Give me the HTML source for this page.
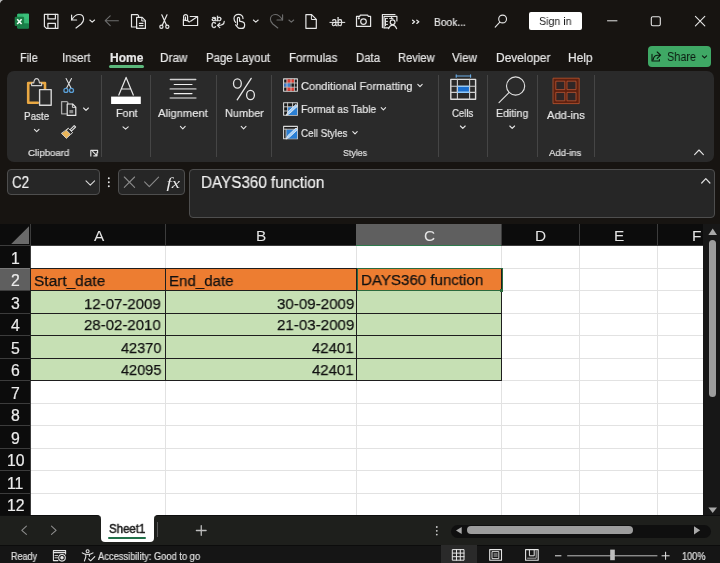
<!DOCTYPE html>
<html><head><meta charset="utf-8">
<style>
*{margin:0;padding:0;box-sizing:border-box}
html,body{width:720px;height:563px;overflow:hidden;background:#171411;font-family:"Liberation Sans",sans-serif}
.a{position:absolute}
.t{position:absolute;white-space:nowrap;line-height:1;font-family:"Liberation Sans",sans-serif;will-change:transform}
svg.a{overflow:visible;will-change:transform}
</style></head><body>
<div class="a" style="left:0px;top:0px;width:720px;height:224px;background:#171411;"></div>
<div class="a" style="left:7px;top:70.5px;width:707px;height:91px;background:#2a2a2a;border-radius:7px"></div>
<div class="a" style="left:7px;top:169px;width:92.5px;height:26px;background:#262626;border:1px solid #4e4e4e;border-radius:4px"></div>
<div class="a" style="left:118px;top:169px;width:67px;height:26px;background:#262626;border:1px solid #4e4e4e;border-radius:4px"></div>
<div class="a" style="left:189px;top:169px;width:526px;height:48.5px;background:#262626;border:1px solid #4e4e4e;border-radius:4px"></div>
<div class="a" style="left:647.5px;top:45.8px;width:63.5px;height:21.7px;background:#3fa865;border-radius:4px"></div>
<div class="a" style="left:529px;top:12px;width:52.5px;height:18.2px;background:#ffffff;border-radius:2px"></div>
<div class="a" style="left:109px;top:65.3px;width:35.3px;height:2.5px;background:#5cb87c;border-radius:2px"></div>
<div class="a" style="left:0px;top:224px;width:703px;height:292px;background:#ffffff;"></div>
<div class="a" style="left:0px;top:224px;width:703px;height:22px;background:#0c0c0c;"></div>
<div class="a" style="left:0px;top:224px;width:31px;height:292px;background:#0c0c0c;"></div>
<div class="a" style="left:165px;top:246px;width:1px;height:270px;background:#e2e2e2;"></div>
<div class="a" style="left:356px;top:246px;width:1px;height:270px;background:#e2e2e2;"></div>
<div class="a" style="left:501px;top:246px;width:1px;height:270px;background:#e2e2e2;"></div>
<div class="a" style="left:579px;top:246px;width:1px;height:270px;background:#e2e2e2;"></div>
<div class="a" style="left:657px;top:246px;width:1px;height:270px;background:#e2e2e2;"></div>
<div class="a" style="left:31px;top:268px;width:672px;height:1px;background:#e2e2e2;"></div>
<div class="a" style="left:31px;top:290px;width:672px;height:1px;background:#e2e2e2;"></div>
<div class="a" style="left:31px;top:313px;width:672px;height:1px;background:#e2e2e2;"></div>
<div class="a" style="left:31px;top:335px;width:672px;height:1px;background:#e2e2e2;"></div>
<div class="a" style="left:31px;top:358px;width:672px;height:1px;background:#e2e2e2;"></div>
<div class="a" style="left:31px;top:380px;width:672px;height:1px;background:#e2e2e2;"></div>
<div class="a" style="left:31px;top:403px;width:672px;height:1px;background:#e2e2e2;"></div>
<div class="a" style="left:31px;top:425px;width:672px;height:1px;background:#e2e2e2;"></div>
<div class="a" style="left:31px;top:448px;width:672px;height:1px;background:#e2e2e2;"></div>
<div class="a" style="left:31px;top:470px;width:672px;height:1px;background:#e2e2e2;"></div>
<div class="a" style="left:31px;top:493px;width:672px;height:1px;background:#e2e2e2;"></div>
<div class="a" style="left:165px;top:224px;width:1px;height:22px;background:#3c3c3c;"></div>
<div class="a" style="left:356px;top:224px;width:1px;height:22px;background:#3c3c3c;"></div>
<div class="a" style="left:501px;top:224px;width:1px;height:22px;background:#3c3c3c;"></div>
<div class="a" style="left:579px;top:224px;width:1px;height:22px;background:#3c3c3c;"></div>
<div class="a" style="left:657px;top:224px;width:1px;height:22px;background:#3c3c3c;"></div>
<div class="a" style="left:30px;top:224px;width:1px;height:292px;background:#3c3c3c;"></div>
<div class="a" style="left:0px;top:268px;width:31px;height:1px;background:#3c3c3c;"></div>
<div class="a" style="left:0px;top:290px;width:31px;height:1px;background:#3c3c3c;"></div>
<div class="a" style="left:0px;top:313px;width:31px;height:1px;background:#3c3c3c;"></div>
<div class="a" style="left:0px;top:335px;width:31px;height:1px;background:#3c3c3c;"></div>
<div class="a" style="left:0px;top:358px;width:31px;height:1px;background:#3c3c3c;"></div>
<div class="a" style="left:0px;top:380px;width:31px;height:1px;background:#3c3c3c;"></div>
<div class="a" style="left:0px;top:403px;width:31px;height:1px;background:#3c3c3c;"></div>
<div class="a" style="left:0px;top:425px;width:31px;height:1px;background:#3c3c3c;"></div>
<div class="a" style="left:0px;top:448px;width:31px;height:1px;background:#3c3c3c;"></div>
<div class="a" style="left:0px;top:470px;width:31px;height:1px;background:#3c3c3c;"></div>
<div class="a" style="left:0px;top:493px;width:31px;height:1px;background:#3c3c3c;"></div>
<div class="a" style="left:0px;top:245px;width:703px;height:1px;background:#3c3c3c;"></div>
<div class="a" style="left:0px;top:268px;width:30px;height:22px;background:#5f5f5f;"></div>
<div class="a" style="left:0px;top:268px;width:30px;height:1px;background:#7a7a7a;"></div>
<div class="a" style="left:356px;top:224px;width:145px;height:21px;background:#5f5f5f;"></div>
<div class="a" style="left:356px;top:244.5px;width:145px;height:1.5px;background:#2f7a4d;"></div>
<svg class="a" style="left:0;top:0" width="720" height="563"><polygon points="29,226.3 29,244.1 11.2,244.1" fill="#6a6a6a"/></svg>
<div class="a" style="left:31px;top:268px;width:470px;height:22px;background:#ed7d31;"></div>
<div class="a" style="left:31px;top:290px;width:470px;height:90px;background:#c6e0b4;"></div>
<div class="a" style="left:30px;top:268px;width:472px;height:1px;background:#1e1e1e;"></div>
<div class="a" style="left:30px;top:290px;width:472px;height:1px;background:#1e1e1e;"></div>
<div class="a" style="left:30px;top:313px;width:472px;height:1px;background:#1e1e1e;"></div>
<div class="a" style="left:30px;top:335px;width:472px;height:1px;background:#1e1e1e;"></div>
<div class="a" style="left:30px;top:358px;width:472px;height:1px;background:#1e1e1e;"></div>
<div class="a" style="left:30px;top:380px;width:472px;height:1px;background:#1e1e1e;"></div>
<div class="a" style="left:30px;top:268px;width:1px;height:113px;background:#1e1e1e;"></div>
<div class="a" style="left:165px;top:268px;width:1px;height:113px;background:#1e1e1e;"></div>
<div class="a" style="left:356px;top:268px;width:1px;height:113px;background:#1e1e1e;"></div>
<div class="a" style="left:501px;top:268px;width:1px;height:113px;background:#1e1e1e;"></div>
<div class="a" style="left:356.5px;top:267.5px;width:146px;height:23.5px;background:transparent;border:1.4px solid #2a6a3e"></div>
<div class="a" style="left:499.8px;top:288.6px;width:3.6px;height:3.6px;background:#2a6a3e;"></div>
<div class="t" style="left:93.54px;top:227.76px;font-size:15.4px;color:#e4e4e4;">A</div>
<div class="t" style="left:256.08px;top:227.76px;font-size:15.4px;color:#e4e4e4;">B</div>
<div class="t" style="left:423.66px;top:227.76px;font-size:15.4px;color:#e4e4e4;">C</div>
<div class="t" style="left:535.16px;top:227.76px;font-size:15.4px;color:#e4e4e4;">D</div>
<div class="t" style="left:613.58px;top:227.76px;font-size:15.4px;color:#e4e4e4;">E</div>
<div class="t" style="left:692.00px;top:227.76px;font-size:15.4px;color:#e4e4e4;">F</div>
<div class="t" style="left:10.92px;top:250.72px;font-size:15.8px;color:#ececec;-webkit-text-stroke:0.2px #ececec;">1</div>
<div class="t" style="left:10.92px;top:273.22px;font-size:15.8px;color:#ececec;-webkit-text-stroke:0.2px #ececec;">2</div>
<div class="t" style="left:10.92px;top:295.72px;font-size:15.8px;color:#ececec;-webkit-text-stroke:0.2px #ececec;">3</div>
<div class="t" style="left:10.92px;top:318.22px;font-size:15.8px;color:#ececec;-webkit-text-stroke:0.2px #ececec;">4</div>
<div class="t" style="left:10.92px;top:340.72px;font-size:15.8px;color:#ececec;-webkit-text-stroke:0.2px #ececec;">5</div>
<div class="t" style="left:10.92px;top:363.22px;font-size:15.8px;color:#ececec;-webkit-text-stroke:0.2px #ececec;">6</div>
<div class="t" style="left:10.92px;top:385.72px;font-size:15.8px;color:#ececec;-webkit-text-stroke:0.2px #ececec;">7</div>
<div class="t" style="left:10.92px;top:408.22px;font-size:15.8px;color:#ececec;-webkit-text-stroke:0.2px #ececec;">8</div>
<div class="t" style="left:10.92px;top:430.72px;font-size:15.8px;color:#ececec;-webkit-text-stroke:0.2px #ececec;">9</div>
<div class="t" style="left:6.53px;top:453.22px;font-size:15.8px;color:#ececec;-webkit-text-stroke:0.2px #ececec;">10</div>
<div class="t" style="left:7.08px;top:475.72px;font-size:15.8px;color:#ececec;-webkit-text-stroke:0.2px #ececec;">11</div>
<div class="t" style="left:6.53px;top:498.22px;font-size:15.8px;color:#ececec;-webkit-text-stroke:0.2px #ececec;">12</div>
<div class="t" style="left:33.80px;top:272.57px;font-size:15.5px;color:#111;transform:scaleX(0.9954);transform-origin:0 0;-webkit-text-stroke:0.25px #111;">Start_date</div>
<div class="t" style="left:169.10px;top:272.57px;font-size:15.5px;color:#111;transform:scaleX(0.9723);transform-origin:0 0;-webkit-text-stroke:0.25px #111;">End_date</div>
<div class="t" style="left:361.20px;top:272.47px;font-size:15.5px;color:#111;transform:scaleX(0.9733);transform-origin:0 0;-webkit-text-stroke:0.25px #111;">DAYS360 function</div>
<div class="t" style="left:84.30px;top:295.57px;font-size:15.5px;color:#111;transform:scaleX(0.9674);transform-origin:0 0;-webkit-text-stroke:0.25px #111;">12-07-2009</div>
<div class="t" style="left:84.30px;top:317.47px;font-size:15.5px;color:#111;transform:scaleX(0.9674);transform-origin:0 0;-webkit-text-stroke:0.25px #111;">28-02-2010</div>
<div class="t" style="left:120.60px;top:339.67px;font-size:15.5px;color:#111;transform:scaleX(0.9376);transform-origin:0 0;-webkit-text-stroke:0.25px #111;">42370</div>
<div class="t" style="left:120.60px;top:362.27px;font-size:15.5px;color:#111;transform:scaleX(0.9376);transform-origin:0 0;-webkit-text-stroke:0.25px #111;">42095</div>
<div class="t" style="left:276.70px;top:295.57px;font-size:15.5px;color:#111;transform:scaleX(0.9750);transform-origin:0 0;-webkit-text-stroke:0.25px #111;">30-09-2009</div>
<div class="t" style="left:276.70px;top:317.47px;font-size:15.5px;color:#111;transform:scaleX(0.9750);transform-origin:0 0;-webkit-text-stroke:0.25px #111;">21-03-2009</div>
<div class="t" style="left:312.40px;top:339.67px;font-size:15.5px;color:#111;transform:scaleX(0.9654);transform-origin:0 0;-webkit-text-stroke:0.25px #111;">42401</div>
<div class="t" style="left:312.40px;top:362.27px;font-size:15.5px;color:#111;transform:scaleX(0.9654);transform-origin:0 0;-webkit-text-stroke:0.25px #111;">42401</div>
<div class="a" style="left:703px;top:224px;width:17px;height:291px;background:#171717;"></div>
<div class="a" style="left:709px;top:239.5px;width:7.4px;height:157.5px;background:#9d9d9d;border-radius:4px"></div>
<div class="a" style="left:0px;top:515px;width:720px;height:30.5px;background:#1e1f1c;"></div>
<div class="a" style="left:0px;top:545px;width:720px;height:1px;background:#0c0c0c;"></div>
<div class="a" style="left:0px;top:546px;width:720px;height:17px;background:#151515;"></div>
<div class="a" style="left:96px;top:515px;width:63px;height:6px;background:#ffffff;"></div>
<div class="a" style="left:0px;top:515px;width:100.6px;height:30px;background:#1e1f1c;border-radius:0 4px 0 0;border-top:1.5px solid #0e0e0e"></div>
<div class="a" style="left:154.2px;top:515px;width:566px;height:30px;background:#1e1f1c;border-radius:4px 0 0 0;border-top:1.5px solid #0e0e0e"></div>
<div class="a" style="left:100.6px;top:515px;width:53.6px;height:26.7px;background:#ffffff;border-radius:0 0 4px 4px"></div>
<div class="a" style="left:107.8px;top:537.2px;width:38.3px;height:1.9px;background:#1f6f48;border-radius:1px"></div>
<div class="a" style="left:157px;top:522.2px;width:1px;height:14.5px;background:#555555;"></div>
<div class="a" style="left:450.8px;top:524.5px;width:260px;height:13px;background:#0f0f0f;border-radius:6.5px"></div>
<div class="a" style="left:466.5px;top:526.2px;width:166.4px;height:7.7px;background:#9d9d9d;border-radius:4px"></div>
<div class="a" style="left:440.8px;top:544.5px;width:36px;height:18.5px;background:#2a2a2a;"></div>
<div class="t" style="left:20.00px;top:51.84px;font-size:12px;color:#e6e6e6;transform:scaleX(0.9161);transform-origin:0 0;-webkit-text-stroke:0.2px #e6e6e6;">File</div>
<div class="t" style="left:62.30px;top:51.84px;font-size:12px;color:#e6e6e6;transform:scaleX(0.9467);transform-origin:0 0;-webkit-text-stroke:0.2px #e6e6e6;">Insert</div>
<div class="t" style="left:110.00px;top:51.84px;font-size:12px;color:#e6e6e6;font-weight:bold;-webkit-text-stroke:0.2px #e6e6e6;">Home</div>
<div class="t" style="left:160.30px;top:51.84px;font-size:12px;color:#e6e6e6;transform:scaleX(0.9779);transform-origin:0 0;-webkit-text-stroke:0.2px #e6e6e6;">Draw</div>
<div class="t" style="left:206.00px;top:51.84px;font-size:12px;color:#e6e6e6;transform:scaleX(0.9498);transform-origin:0 0;-webkit-text-stroke:0.2px #e6e6e6;">Page Layout</div>
<div class="t" style="left:289.30px;top:51.84px;font-size:12px;color:#e6e6e6;transform:scaleX(0.9672);transform-origin:0 0;-webkit-text-stroke:0.2px #e6e6e6;">Formulas</div>
<div class="t" style="left:356.00px;top:51.84px;font-size:12px;color:#e6e6e6;transform:scaleX(0.9456);transform-origin:0 0;-webkit-text-stroke:0.2px #e6e6e6;">Data</div>
<div class="t" style="left:397.70px;top:51.84px;font-size:12px;color:#e6e6e6;transform:scaleX(0.9299);transform-origin:0 0;-webkit-text-stroke:0.2px #e6e6e6;">Review</div>
<div class="t" style="left:452.40px;top:51.84px;font-size:12px;color:#e6e6e6;transform:scaleX(0.9651);transform-origin:0 0;-webkit-text-stroke:0.2px #e6e6e6;">View</div>
<div class="t" style="left:495.60px;top:51.84px;font-size:12px;color:#e6e6e6;transform:scaleX(0.9942);transform-origin:0 0;-webkit-text-stroke:0.2px #e6e6e6;">Developer</div>
<div class="t" style="left:568.40px;top:51.84px;font-size:12px;color:#e6e6e6;transform:scaleX(0.9935);transform-origin:0 0;-webkit-text-stroke:0.2px #e6e6e6;">Help</div>
<div class="t" style="left:666.60px;top:51.14px;font-size:12px;color:#0b1a10;transform:scaleX(0.9082);transform-origin:0 0;">Share</div>
<div class="t" style="left:434.40px;top:16.66px;font-size:11.5px;color:#e6e6e6;transform:scaleX(0.8905);transform-origin:0 0;-webkit-text-stroke:0.2px #e6e6e6;">Book...</div>
<div class="t" style="left:538.80px;top:16.06px;font-size:11.5px;color:#1a1a1a;transform:scaleX(0.9264);transform-origin:0 0;">Sign in</div>
<div class="t" style="left:24.30px;top:111.46px;font-size:11.5px;color:#e8e8e8;transform:scaleX(0.8577);transform-origin:0 0;-webkit-text-stroke:0.2px #e8e8e8;">Paste</div>
<div class="t" style="left:115.50px;top:108.46px;font-size:11.5px;color:#e8e8e8;transform:scaleX(0.9348);transform-origin:0 0;-webkit-text-stroke:0.2px #e8e8e8;">Font</div>
<div class="t" style="left:158.20px;top:108.26px;font-size:11.5px;color:#e8e8e8;transform:scaleX(0.9723);transform-origin:0 0;-webkit-text-stroke:0.2px #e8e8e8;">Alignment</div>
<div class="t" style="left:224.50px;top:108.36px;font-size:11.5px;color:#e8e8e8;transform:scaleX(0.9515);transform-origin:0 0;-webkit-text-stroke:0.2px #e8e8e8;">Number</div>
<div class="t" style="left:301.40px;top:80.66px;font-size:11.5px;color:#e8e8e8;transform:scaleX(0.9638);transform-origin:0 0;-webkit-text-stroke:0.2px #e8e8e8;">Conditional Formatting</div>
<div class="t" style="left:301.40px;top:103.86px;font-size:11.5px;color:#e8e8e8;transform:scaleX(0.9158);transform-origin:0 0;-webkit-text-stroke:0.2px #e8e8e8;">Format as Table</div>
<div class="t" style="left:301.40px;top:127.86px;font-size:11.5px;color:#e8e8e8;transform:scaleX(0.8558);transform-origin:0 0;-webkit-text-stroke:0.2px #e8e8e8;">Cell Styles</div>
<div class="t" style="left:452.40px;top:108.36px;font-size:11.5px;color:#e8e8e8;transform:scaleX(0.8324);transform-origin:0 0;-webkit-text-stroke:0.2px #e8e8e8;">Cells</div>
<div class="t" style="left:495.60px;top:108.36px;font-size:11.5px;color:#e8e8e8;transform:scaleX(0.9207);transform-origin:0 0;-webkit-text-stroke:0.2px #e8e8e8;">Editing</div>
<div class="t" style="left:546.90px;top:109.86px;font-size:11.5px;color:#e8e8e8;transform:scaleX(0.9696);transform-origin:0 0;-webkit-text-stroke:0.2px #e8e8e8;">Add-ins</div>
<div class="t" style="left:27.80px;top:148.10px;font-size:9.8px;color:#e0e0e0;transform:scaleX(0.9846);transform-origin:0 0;-webkit-text-stroke:0.2px #e0e0e0;">Clipboard</div>
<div class="t" style="left:342.70px;top:148.20px;font-size:9.8px;color:#e0e0e0;transform:scaleX(0.9025);transform-origin:0 0;-webkit-text-stroke:0.2px #e0e0e0;">Styles</div>
<div class="t" style="left:549.20px;top:148.20px;font-size:9.8px;color:#e0e0e0;transform:scaleX(0.9753);transform-origin:0 0;-webkit-text-stroke:0.2px #e0e0e0;">Add-ins</div>
<div class="t" style="left:11.80px;top:174.65px;font-size:16px;color:#f2f2f2;transform:scaleX(0.8350);transform-origin:0 0;-webkit-text-stroke:0.2px #f2f2f2;">C2</div>
<div class="t" style="left:200.60px;top:174.65px;font-size:16px;color:#f2f2f2;transform:scaleX(0.9514);transform-origin:0 0;-webkit-text-stroke:0.2px #f2f2f2;">DAYS360 function</div>
<div class="t" style="left:108.90px;top:523.40px;font-size:12.4px;color:#202020;transform:scaleX(0.9235);transform-origin:0 0;-webkit-text-stroke:0.5px #202020;">Sheet1</div>
<div class="t" style="left:10.70px;top:552.03px;font-size:10px;color:#e0e0e0;transform:scaleX(0.8997);transform-origin:0 0;-webkit-text-stroke:0.2px #e0e0e0;">Ready</div>
<div class="t" style="left:98.30px;top:551.93px;font-size:10px;color:#e0e0e0;transform:scaleX(0.9324);transform-origin:0 0;-webkit-text-stroke:0.2px #e0e0e0;">Accessibility: Good to go</div>
<div class="t" style="left:681.50px;top:551.83px;font-size:10px;color:#e0e0e0;transform:scaleX(0.9180);transform-origin:0 0;-webkit-text-stroke:0.2px #e0e0e0;">100%</div>
<div class="a" style="left:101px;top:75px;width:1px;height:81.5px;background:#454545;"></div>
<div class="a" style="left:150px;top:75px;width:1px;height:81.5px;background:#454545;"></div>
<div class="a" style="left:216px;top:75px;width:1px;height:81.5px;background:#454545;"></div>
<div class="a" style="left:271px;top:75px;width:1px;height:81.5px;background:#454545;"></div>
<div class="a" style="left:438px;top:75px;width:1px;height:81.5px;background:#454545;"></div>
<div class="a" style="left:487px;top:75px;width:1px;height:81.5px;background:#454545;"></div>
<div class="a" style="left:537px;top:75px;width:1px;height:81.5px;background:#454545;"></div>
<div class="a" style="left:594px;top:75px;width:1px;height:81.5px;background:#454545;"></div>
<svg class="a" style="left:0;top:0" width="720" height="563"><g fill="none" stroke-linecap="round" stroke-linejoin="round">
<!-- name box chevron -->
<path d="M86,180.8 L90.3,185.1 L94.6,180.8" stroke="#d8d8d8" stroke-width="1.1"/>
<!-- dots -->
<circle cx="108.8" cy="178.2" r="0.95" fill="#e6e6e6"/>
<circle cx="108.8" cy="182.2" r="0.95" fill="#e6e6e6"/>
<circle cx="108.8" cy="186.2" r="0.95" fill="#e6e6e6"/>
<!-- X check -->
<path d="M124.3,177 L134.6,187.3 M134.6,177 L124.3,187.3" stroke="#8a8a8a" stroke-width="1.1"/>
<path d="M144.6,181.9 L149.3,186.6 L158.6,177.2" stroke="#8a8a8a" stroke-width="1.1"/>
<!-- formula expand -->
<path d="M701.7,183 L705.8,178.6 L709.9,183" stroke="#e0e0e0" stroke-width="1.2"/>
<!-- sheet nav -->
<path d="M26.4,526.2 L21.8,530.3 L26.4,534.4" stroke="#8c8c8c" stroke-width="1.1"/>
<path d="M51.5,526.2 L56.1,530.3 L51.5,534.4" stroke="#8c8c8c" stroke-width="1.1"/>
<path d="M196.4,530.5 H206.1 M201.25,525.7 V535.3" stroke="#bdbdbd" stroke-width="1.3"/>
<!-- share icon + chevron -->
<path d="M657.2,52 L660.6,55.2 L657.2,58.4 M660.4,55.2 H657.6 C655.2,55.2 653.6,56.8 653.2,59.6 M652,54.4 V61 H659.4 V59.6" stroke="#0b1a10" stroke-width="1.1"/>
<path d="M702.4,55.8 L704.5,57.9 L706.6,55.8" stroke="#0b1a10" stroke-width="1.1"/>
<!-- status icons -->
<g stroke="#e6e6e6" stroke-width="1.05">
<path d="M58,560.6 H53.4 V550.6 H65.6 V554"/>
<path d="M53.4,552.6 H65.6"/>
<path d="M55,555.6 H57.6 M55,557.8 H57.6" stroke-width="0.9"/>
<circle cx="62" cy="557.8" r="3.3"/>
<circle cx="62" cy="557.8" r="1.2" fill="#e6e6e6"/>
<circle cx="87.6" cy="551.2" r="1.5"/>
<path d="M82.2,552.8 C83.6,554 85.6,554.4 87.6,554.4 C89.6,554.4 91.6,554 93,552.8"/>
<path d="M85.8,554.4 V557 L84.4,561 M89.4,554.4 V556.2"/>
<path d="M88.6,558.8 L90.6,560.8 L94.8,556.6"/>
<!-- normal view -->
<rect x="452.7" y="549.6" width="11.3" height="10.6" stroke-width="1"/>
<path d="M456.5,549.6 V560.2 M460.3,549.6 V560.2 M452.7,553.1 H464 M452.7,556.7 H464" stroke-width="1"/>
<!-- page layout -->
<rect x="489.7" y="549.6" width="11.8" height="10.6" stroke-width="1.1"/>
<rect x="492.4" y="551.6" width="6.4" height="7" stroke-width="0.9"/>
<path d="M494,554 H497.2 M494,556 H497.2" stroke-width="0.8"/>
<!-- page break -->
<rect x="525.6" y="549.6" width="12.6" height="10.6" stroke-width="1.1"/>
<path d="M529.4,549.8 V555.8 H534.2 V549.8" stroke-width="1"/>
<path d="M527.6,558.2 H536.2 V550.8" stroke-width="0.7"/>
<!-- zoom -->
<path d="M555.4,555.8 H561" stroke-width="1"/>
<path d="M567.6,555.8 H657" stroke="#bdbdbd" stroke-width="1"/>
<path d="M662,555.8 H669.2 M665.6,552.2 V559.4" stroke-width="1"/>
</g>
<rect x="610.2" y="549.6" width="4.6" height="10.6" fill="#bdbdbd"/>
<!-- h scroll dots -->
<circle cx="436.8" cy="527" r="0.9" fill="#d0d0d0"/>
<circle cx="436.8" cy="530.8" r="0.9" fill="#d0d0d0"/>
<circle cx="436.8" cy="534.6" r="0.9" fill="#d0d0d0"/>
<path d="M461.7,527 V533.9 L456,530.45 Z" fill="#a8a8a8"/>
<path d="M694,526.2 V534.5 L700.2,530.35 Z" fill="#a8a8a8"/>
<!-- v scroll arrows -->
<path d="M708.4,234.9 H717 L712.7,228.5 Z" fill="#a8a8a8"/>
<path d="M708.4,507.4 H717 L712.7,513 Z" fill="#a8a8a8"/>
</g>
<text x="166.6" y="187.6" font-family="Liberation Serif" font-style="italic" font-size="15.5" fill="#eaeaea" textLength="13.4" lengthAdjust="spacingAndGlyphs">fx</text>
<g stroke-linecap="round" stroke-linejoin="round">
<!-- paste -->
<path d="M28.2,83 H45 V89.6 M37.8,102.8 H28.2 V83" fill="none" stroke="#e9a843" stroke-width="2.6"/>
<path d="M31.6,85.6 V83 H33.8 C34,80.4 35.2,78.6 36.6,78.6 C38,78.6 39.2,80.4 39.4,83 H41.6 V85.6 Z" fill="#2a2a2a" stroke="#cfcfcf" stroke-width="1.1"/>
<rect x="39.6" y="89.6" width="11.6" height="15.6" fill="#2a2a2a" stroke="#d6d6d6" stroke-width="1.4"/>
<!-- scissors -->
<path d="M66.1,78.6 L71.2,88.4 M71.5,78.6 L66.4,88.4" fill="none" stroke="#e0e0e0" stroke-width="1.1"/>
<circle cx="65.9" cy="90.4" r="2" fill="none" stroke="#5a9fd6" stroke-width="1.3"/>
<circle cx="71.5" cy="90.4" r="2" fill="none" stroke="#5a9fd6" stroke-width="1.3"/>
<!-- copy -->
<path d="M66.4,113.8 H61.6 V101.6 H67 L67.8,102.4 V104" fill="none" stroke="#a8a8a8" stroke-width="1.3"/>
<path d="M67.2,104 H72.6 L75.8,107.2 V115.4 H67.2 Z" fill="none" stroke="#e6e6e6" stroke-width="1.2"/>
<path d="M72.4,104.2 V107.4 H75.6" fill="none" stroke="#e6e6e6" stroke-width="0.9"/>
<rect x="69.4" y="110" width="3.8" height="3.2" fill="#8a8a8a"/>
<path d="M83.6,108 L86,110.4 L88.4,108" fill="none" stroke="#e6e6e6" stroke-width="1.1"/>
<!-- format painter -->
<path d="M74.2,125.6 L75.6,127 L71.4,131.2 L70,129.8 Z" fill="#2a2a2a" stroke="#e0e0e0" stroke-width="1.1"/>
<path d="M68.6,128.6 L72.6,132.6 L66.4,138.4 L61.6,133.6 Z" fill="#e9b55a" stroke="#d0d0d0" stroke-width="0.9"/>
<path d="M68.6,128.6 L72.6,132.6 L70.6,134.4 L66.6,130.4 Z" fill="#2a2a2a" stroke="#d0d0d0" stroke-width="0.9"/>
<!-- font -->
<path d="M118.6,95.6 L126.1,77.4 L133.5,95.6 M121.4,89 H130.8" fill="none" stroke="#e8e8e8" stroke-width="1.2" stroke-linecap="butt"/>
<rect x="111.1" y="96.6" width="29.7" height="7.4" fill="#ffffff"/>
<!-- alignment -->
<path d="M170.4,79.6 H195.7" stroke="#cfcfcf" stroke-width="1.5"/>
<path d="M174.2,84.5 H192" stroke="#f0f0f0" stroke-width="1.1"/>
<path d="M170.4,88.9 H195.7" stroke="#9c9c9c" stroke-width="1.9"/>
<path d="M174.2,93.6 H192" stroke="#f0f0f0" stroke-width="1.1"/>
<path d="M170.4,98 H195.7" stroke="#8c8c8c" stroke-width="1.9"/>
<!-- number -->
<g fill="none" stroke="#e6e6e6" stroke-width="1.3">
<ellipse cx="237.4" cy="83.5" rx="3.9" ry="4.7"/>
<ellipse cx="250.5" cy="95" rx="3.9" ry="4.7"/>
<path d="M251.2,78.4 L237.2,99.8"/>
</g>
<!-- cond formatting -->
<rect x="283.6" y="78.9" width="13.8" height="12.4" fill="#1a1a1a" stroke="#d8d8d8" stroke-width="1.1"/>
<rect x="287.2" y="79.4" width="7" height="3.4" fill="#e03b30"/>
<rect x="287.2" y="87.4" width="7" height="3.4" fill="#e03b30"/>
<rect x="284.2" y="83.3" width="6.2" height="3.6" fill="#3f7fd0"/>
<path d="M287,79 V91 M291,79 V91 M294.4,79 V91 M283.6,83 H297.4 M283.6,87.2 H297.4" stroke="#d0d0d0" stroke-width="0.8" fill="none"/>
<path d="M287,79 V83 M287,87.2 V91" stroke="#f08080" stroke-width="0.8"/>
<!-- format as table -->
<rect x="283.6" y="102.8" width="13.8" height="12.4" fill="#1a1a1a" stroke="#d8d8d8" stroke-width="1.1"/>
<rect x="287.8" y="107" width="9.4" height="8" fill="#2a7fd4"/>
<path d="M287.6,102.8 V115.2 M292.6,102.8 V107 M283.6,106.8 H297.4 M283.6,111 H287.6" stroke="#d0d0d0" stroke-width="0.9" fill="none"/>
<path d="M286.4,115 L288,111.8 L296,104.4 L297.6,106 L289.6,113.4 Z" fill="#9fd0ff" stroke="#e8e8e8" stroke-width="0.9"/>
<!-- cell styles -->
<rect x="283.6" y="126.4" width="13.8" height="12.4" fill="#1a1a1a" stroke="#d8d8d8" stroke-width="1.1"/>
<rect x="286.2" y="129.4" width="11" height="9.2" fill="#2a7fd4"/>
<path d="M283.6,129.2 H297.4 M286,129.2 V138.8" stroke="#d0d0d0" stroke-width="0.9" fill="none"/>
<path d="M286.4,138.6 L288,135.4 L296,128 L297.6,129.6 L289.6,137 Z" fill="#9fd0ff" stroke="#e8e8e8" stroke-width="0.9"/>
<!-- cells -->
<path d="M456.2,76 H470.6 M456.2,74.8 V77.2 M470.6,74.8 V77.2" stroke="#6aaee8" stroke-width="1.1" fill="none"/>
<rect x="457.6" y="86.4" width="11.8" height="6" fill="#1a6fcf" stroke="#8ccaff" stroke-width="0.8"/>
<rect x="450.8" y="79.4" width="24.8" height="19.8" fill="none" stroke="#dcdcdc" stroke-width="1.4"/>
<path d="M457.4,79.4 V99.2 M469.6,79.4 V99.2 M450.8,86.3 H475.6 M450.8,92.4 H475.6" stroke="#d0d0d0" stroke-width="1.1" fill="none"/>
<path d="M457.6,86.3 H469.4 M457.6,92.4 H469.4" stroke="#8ccaff" stroke-width="1.1"/>
<!-- editing -->
<circle cx="515.6" cy="86" r="9.1" fill="none" stroke="#e0e0e0" stroke-width="1.1"/>
<path d="M509.2,92.4 L499,102.6" stroke="#e0e0e0" stroke-width="1.1"/>
<!-- add-ins -->
<rect x="553.4" y="78.2" width="25.8" height="25.4" fill="#5e200f" stroke="#c0552f" stroke-width="0.8"/>
<rect x="556.2" y="81.2" width="8.6" height="8.4" fill="#2f2626" stroke="#c25a35" stroke-width="0.75"/>
<rect x="567.4" y="81.2" width="8.6" height="8.4" fill="#2f2626" stroke="#c25a35" stroke-width="0.75"/>
<rect x="556.2" y="92.4" width="8.6" height="8.4" fill="#2f2626" stroke="#c25a35" stroke-width="0.75"/>
<rect x="567.4" y="92.4" width="8.6" height="8.4" fill="#2f2626" stroke="#c25a35" stroke-width="0.75"/>
<!-- chevrons under labels -->
<g fill="none" stroke="#e6e6e6" stroke-width="1.1">
<path d="M34.4,129.4 L36.7,131.7 L39,129.4"/>
<path d="M123,126.8 L125.6,129.2 L128.2,126.8"/>
<path d="M180.4,126.4 L182.8,128.8 L185.2,126.4"/>
<path d="M241.2,126.4 L243.6,128.8 L246,126.4"/>
<path d="M460.4,126 L462.8,128.4 L465.2,126"/>
<path d="M509.8,126 L512.2,128.4 L514.6,126"/>
<path d="M417.8,84.4 L420,86.6 L422.2,84.4"/>
<path d="M381.2,107.6 L383.4,109.8 L385.6,107.6"/>
<path d="M352.8,131.6 L355,133.8 L357.2,131.6"/>
<path d="M694.6,154.6 L699,150 L703.4,154.6"/>
</g>
<!-- clipboard launcher -->
<path d="M90.8,156 V150.4 H97.6 V152.6 M92.8,151.6 L96.6,155.4 M97,152.8 V155.8 H94" fill="none" stroke="#e0e0e0" stroke-width="1.2" stroke-linecap="square"/>
</g>
<g fill="none" stroke="#e6e6e6" stroke-width="1.2" stroke-linecap="round" stroke-linejoin="round">
<!-- save -->
<path d="M44.4,14.4 H57.9 V28.4 H46.4 L44.4,26.4 Z"/>
<path d="M47.9,14.4 V18.9 H55.4 V14.4"/>
<path d="M47.9,28.4 V23.3 H55.4 V28.4"/>
<!-- undo -->
<path d="M71.6,15 V20 H76.6"/>
<path d="M71.8,19.8 C73.8,16.2 76.4,14.5 79,14.5 C81.8,14.5 83.6,16.6 83.6,19.3 C83.6,21.2 82.6,22.6 81.2,24 L76,28"/>
<path d="M89.8,20 L92.2,22.2 L94.6,20" stroke-width="1.1"/>
<!-- copy -->
<path d="M136.8,27 H131.5 V14.6 H137.6 L138.6,15.6 V17"/>
<path d="M136.6,17.4 H142.2 L145.4,20.6 V28.4 H136.6 Z"/>
<path d="M139.4,23.3 H143 M139.4,25.6 H143"/>
<path d="M141.8,17.6 V21 H145.2" stroke-width="1"/>
<!-- scissors -->
<path d="M161.8,14.8 L166.6,25.4 M167,14.8 L162.2,25.4"/>
<circle cx="161.4" cy="26.8" r="1.6"/>
<circle cx="167.3" cy="26.8" r="1.6"/>
<!-- mail attach -->
<path d="M183.4,19.4 V25.5 H197.6 V16.5 H190.2"/>
<path d="M190.6,21.2 L197.2,16.8"/>
<path d="M185,20.5 C184,20.3 183.6,19.6 183.6,18.6 V16.6 C183.6,15.4 184.5,14.7 185.6,14.7 C186.8,14.7 187.6,15.4 187.6,16.6 V19.4 C187.6,20.2 187.1,20.6 186.5,20.6 C185.9,20.6 185.5,20.2 185.5,19.4 V17 M187.6,19.2 C187.6,20.8 188.4,21.8 189.6,21.8"/>
<!-- spelling -->
<path d="M224.2,21.4 C224.2,23.8 222.2,25.4 217.6,25.4 M219.8,23.2 L217.4,25.4 L219.8,27.6"/>
<!-- touch -->
<path d="M235.6,22.4 C234.6,21.4 234,20.1 234,18.6 C234,16.1 236,14.3 238.5,14.3 C241,14.3 243,16.1 243,18.6"/>
<path d="M237.4,25 V18.4 C237.4,17.8 237.9,17.3 238.5,17.3 C239.1,17.3 239.6,17.8 239.6,18.4 V21.2 L242.6,21.9 C243.8,22.2 244.6,23.1 244.6,24.3 V25.4 C244.6,27.2 243.4,28.4 241.6,28.4 H240 C239,28.4 238.1,27.9 237.5,27.1 L235.6,24.8"/>
<path d="M253.4,20 L255.8,22.2 L258.2,20" stroke-width="1.1"/>
<!-- new doc -->
<path d="M305.9,14.6 H311.6 L316.3,19.3 V28.3 H305.9 Z"/>
<path d="M311.4,14.8 V19.5 H316.1" stroke-width="1"/>
<!-- strike -->
<path d="M329.9,22.4 H344.8" stroke-width="1"/>
<!-- camera -->
<path d="M356.5,16.4 H359.6 L360.4,15.2 H367.6 L368.4,16.4 H370.6 V26.4 H356.5 Z"/>
<circle cx="363.5" cy="21.6" r="2.8"/>
<circle cx="358.8" cy="18.3" r="0.5" fill="#e6e6e6"/>
<!-- form -->
<path d="M382.4,27.6 V14.5 H395"/>
<path d="M384,27.8 V16.4 H396.9 V21"/>
<path d="M384,27.8 H388.6"/>
<path d="M385.5,18.4 H387.5 M385.5,21.4 H387.5 M385.5,24.4 H387.5 M385.5,18.4 V25.8" stroke-width="1"/>
<path d="M389.6,18.4 H393 M391.6,16.6 V18.6" stroke-width="1"/>
<circle cx="392.6" cy="22.3" r="2.4"/>
<path d="M388.6,28.6 C389.4,26.4 390.8,25.2 392.6,25.2 C394.4,25.2 395.8,26.4 396.6,28.6"/>
<!-- chevrons >> -->
<path d="M412.6,20.2 L414.6,21.8 L412.6,23.4 M416.8,20.2 L418.8,21.8 L416.8,23.4" stroke-width="1.3"/>
<!-- search -->
<circle cx="502.6" cy="19" r="3.9" stroke-width="1.1"/>
<path d="M499.6,22.4 L495.2,27.2" stroke-width="1.1"/>
<!-- min max close -->
<path d="M607.5,20.8 H617" stroke-width="1"/>
<rect x="651.3" y="16.7" width="9" height="9" rx="1.5" stroke-width="1.1"/>
<path d="M695.4,16.4 L704.8,25.8 M704.8,16.4 L695.4,25.8" stroke-width="1.1"/>
</g>
<g fill="none" stroke="#6e6e6e" stroke-width="1.1" stroke-linecap="round" stroke-linejoin="round">
<path d="M105.2,20.7 H118.4 M110.2,15.9 L105.2,20.7 L110.2,25.6"/>
<path d="M282.6,14.8 V20 H277"/>
<path d="M282.4,19.8 C280.4,16.2 277.8,14.5 275.2,14.5 C272.4,14.5 270.4,16.6 270.4,19.3 C270.4,21.2 271.4,22.6 272.8,24 L277.8,28"/>
<path d="M288.9,20 L291.3,22.2 L293.7,20"/>
</g>
<text x="211.5" y="20.9" font-family="Liberation Sans" font-size="7.2" fill="#e6e6e6" stroke="#e6e6e6" stroke-width="0.35" textLength="10.2" lengthAdjust="spacingAndGlyphs">ab</text>
<text x="211.2" y="27.9" font-family="Liberation Sans" font-size="10" fill="#e6e6e6" stroke="#e6e6e6" stroke-width="0.3">c</text>
<text x="331.6" y="25.8" font-family="Liberation Sans" font-size="12.6" fill="#e6e6e6" stroke="#e6e6e6" stroke-width="0.25" textLength="11" lengthAdjust="spacingAndGlyphs">ab</text>
<!-- excel logo -->
<rect x="17.2" y="13.8" width="11.8" height="14.6" rx="1" fill="#1f9a58"/>
<rect x="17.2" y="13.8" width="11.8" height="5" rx="1" fill="#35b874"/>
<rect x="23" y="13.8" width="6" height="9.6" fill="#3cc07c" opacity="0.8"/>
<rect x="17.2" y="23.4" width="11.8" height="5" rx="1" fill="#18804a"/>
<rect x="14.7" y="16.8" width="9.4" height="9.2" rx="1" fill="#1a7d45"/>
<path d="M17.2,19.2 L21.6,24 M21.6,19.2 L17.2,24" stroke="#f4fff8" stroke-width="1.6" stroke-linecap="butt"/>
<path d="M0,0 H3.2 C1.8,0.6 0.6,1.8 0,3.4 Z" fill="#b8b8b8"/>
</svg>
</body></html>
